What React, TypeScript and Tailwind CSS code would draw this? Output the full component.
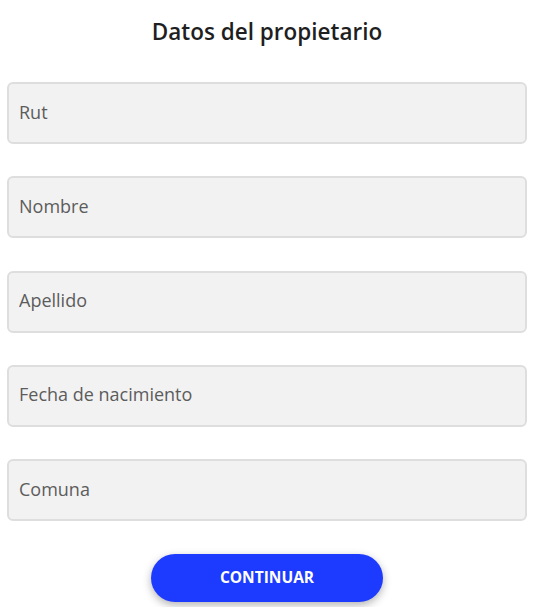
export default function App() {
  const fields = ["Rut", "Nombre", "Apellido", "Fecha de nacimiento", "Comuna"];

  return (
    <main
      className="min-h-screen bg-white pl-[7px] pr-[16px] pt-[17px]"
      style={{ fontFamily: '"Open Sans", sans-serif' }}
    >
      {/* Title */}
      <h1 className="text-center text-[22.5px] leading-[30px] font-semibold text-[#1f1f1f]">
        Datos del propietario
      </h1>

      {/* Fields */}
      <div className="mt-[35px] flex flex-col gap-[32.25px]">
        {fields.map((label) => (
          <input
            key={label}
            placeholder={label}
            className="h-[62px] w-full rounded-[6px] border-2 border-[#dedede] bg-[#f2f2f2] px-[10px] pb-[3px] text-[18px] text-[#555] placeholder:text-[#5c5c5c] outline-none"
          />
        ))}
      </div>

      {/* Button */}
      <div className="mt-[33px] flex justify-center">
        <button className="h-[48px] w-[232px] rounded-full bg-[#1c3bff] text-[15.5px] font-bold text-white shadow-[0_3px_8px_rgba(0,0,0,0.3)]">
          CONTINUAR
        </button>
      </div>
    </main>
  );
}
